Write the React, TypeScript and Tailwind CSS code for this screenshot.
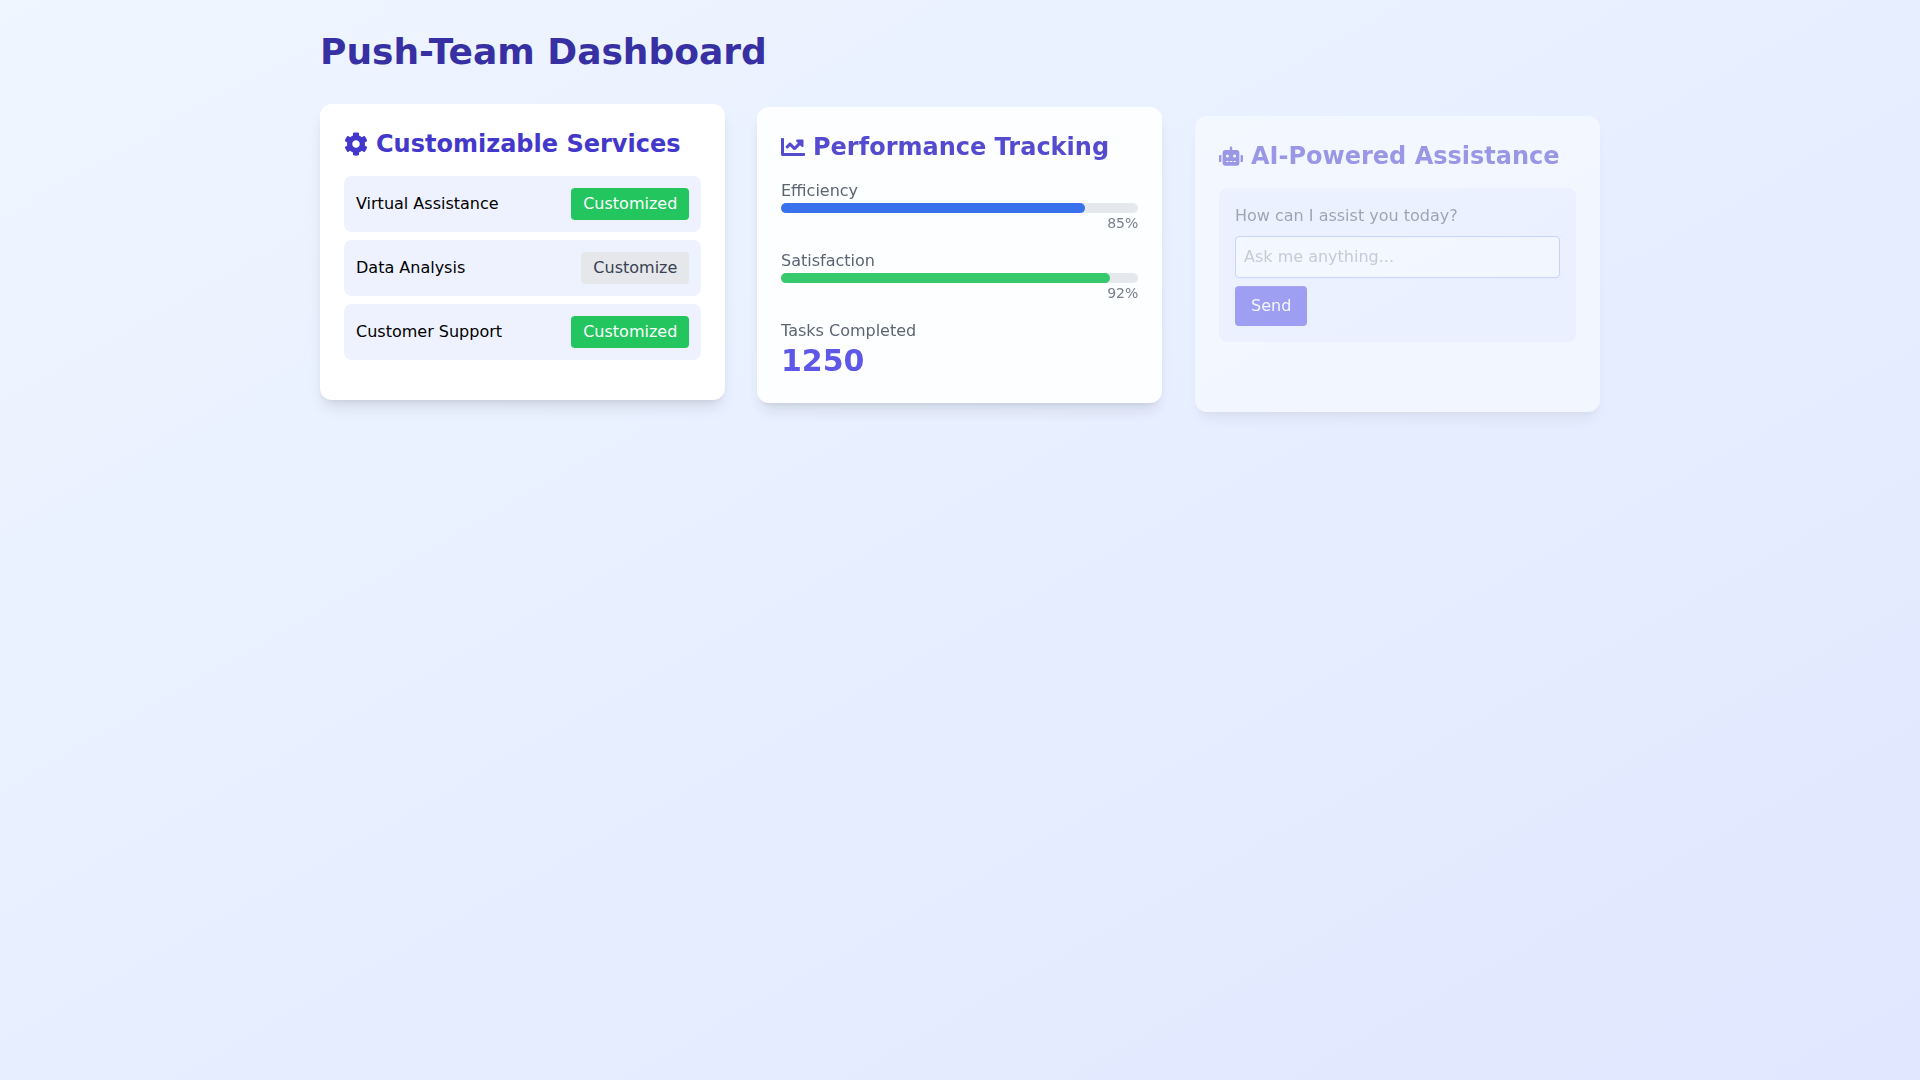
import { FaCog, FaChartLine, FaRobot } from "react-icons/fa";

function Row({ label, on }: { label: string; on: boolean }) {
  return (
    <div className="flex items-center justify-between rounded-lg bg-[#eef2ff] p-3">
      <span>{label}</span>
      <button className={on ? "rounded bg-[#22c55e] px-3 py-1 text-white" : "rounded bg-[#e5e7eb] px-3 py-1 text-[#374151]"}>
        {on ? "Customized" : "Customize"}
      </button>
    </div>
  );
}

function Metric({ label, value, bar }: { label: string; value: number; bar: string }) {
  return (
    <div className="mb-4">
      <div className="text-[#4b5563]">{label}</div>
      <div className="h-2.5 w-full rounded-full bg-[#e5e7eb]">
        <div className={`h-2.5 rounded-full ${bar}`} style={{ width: `${value}%` }} />
      </div>
      <div className="text-right text-sm text-[#6b7280]">{value}%</div>
    </div>
  );
}

export default function App() {
  return (
    <div className="min-h-screen bg-gradient-to-br from-[#eff6ff] to-[#e0e7ff] p-8 font-['DejaVu_Sans',sans-serif]">
      <div className="mx-auto max-w-7xl">
        <h1 className="mb-8 text-4xl font-bold text-[#3730a3]">Push-Team Dashboard</h1>
        <div className="grid grid-cols-3 gap-8">
          <section className="rounded-xl bg-white p-6 shadow-lg">
            <h2 className="mb-4 flex items-center gap-2 text-2xl font-bold text-[#4338ca]">
              <FaCog />
              Customizable Services
            </h2>
            <div className="mb-4 space-y-2">
              <Row label="Virtual Assistance" on />
              <Row label="Data Analysis" on={false} />
              <Row label="Customer Support" on />
            </div>
          </section>

          <section className="translate-y-[3.1px] rounded-xl bg-white p-6 opacity-90 shadow-lg will-change-transform">
            <h2 className="mb-4 flex items-center gap-2 text-2xl font-bold text-[#4338ca]">
              <FaChartLine />
              Performance Tracking
            </h2>
            <Metric label="Efficiency" value={85} bar="bg-[#2563eb]" />
            <Metric label="Satisfaction" value={92} bar="bg-[#22c55e]" />
            <div className="text-[#4b5563]">Tasks Completed</div>
            <div className="text-3xl font-bold text-[#4f46e5]">1250</div>
          </section>

          <section className="translate-y-[12.1px] rounded-xl bg-white p-6 opacity-[0.48] shadow-lg will-change-transform">
            <h2 className="mb-4 flex items-center gap-2 text-2xl font-bold text-[#4338ca]">
              <FaRobot />
              AI-Powered Assistance
            </h2>
            <div className="rounded-lg bg-[#eef2ff] p-4">
              <p className="mb-2 text-[#4b5563]">How can I assist you today?</p>
              <input
                className="w-full rounded border border-[#a5b4fc] bg-white px-2 py-2 placeholder:text-[#9ca3af]"
                placeholder="Ask me anything..."
              />
              <button className="mt-2 rounded bg-[#4f46e5] px-4 py-2 text-white">Send</button>
            </div>
          </section>
        </div>
      </div>
    </div>
  );
}
